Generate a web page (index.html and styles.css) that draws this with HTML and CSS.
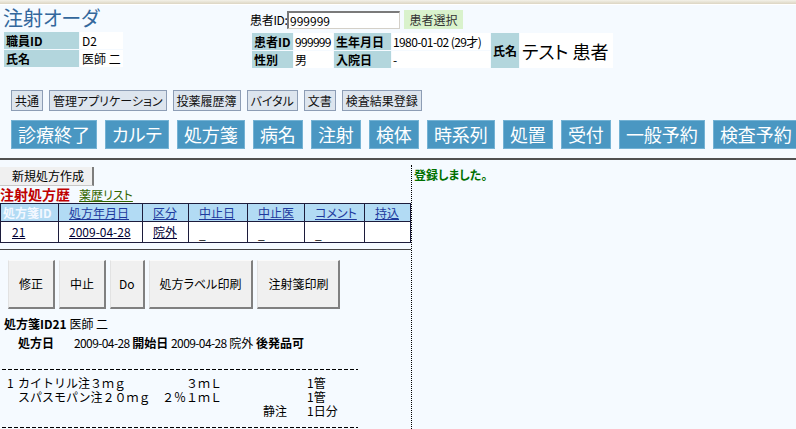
FILE: index.html
```html
<!DOCTYPE html>
<html lang="ja">
<head>
<meta charset="utf-8">
<title>注射オーダ</title>
<link rel="stylesheet" href="styles.css">
</head>
<body>
<div class="topbar"></div>
<header class="head">
  <div class="head-left">
    <h1 class="title">注射オーダ</h1>
    <table class="info staff">
      <tr><th class="s-th">職員ID</th><td class="s-td">D2</td></tr>
      <tr><th class="s-th">氏名</th><td class="s-td">医師 二</td></tr>
    </table>
  </div>
  <div class="head-mid">
    <div class="pid-row">
      <label class="pid-label">患者ID:</label>
      <input class="pid-input" type="text" value="999999">
      <button class="pid-btn" type="button">患者選択</button>
    </div>
    <table class="info patient">
      <tr>
        <th class="p-th1">患者ID</th><td class="p-td1">999999</td>
        <th class="p-th2">生年月日</th><td class="p-td2">1980-01-02 (29才)</td>
        <th class="p-th3" rowspan="2">氏名</th><td class="p-td3" rowspan="2">テスト 患者</td>
      </tr>
      <tr>
        <th class="p-th1">性別</th><td class="p-td1">男</td>
        <th class="p-th2">入院日</th><td class="p-td2">-</td>
      </tr>
    </table>
  </div>
</header>

<nav class="nav">
  <span class="nav-btn">共通</span>
  <span class="nav-btn">管理アプリケーション</span>
  <span class="nav-btn">投薬履歴簿</span>
  <span class="nav-btn">バイタル</span>
  <span class="nav-btn">文書</span>
  <span class="nav-btn">検査結果登録</span>
</nav>

<div class="big">
  <span class="big-btn">診療終了</span>
  <span class="big-btn">カルテ</span>
  <span class="big-btn">処方箋</span>
  <span class="big-btn">病名</span>
  <span class="big-btn">注射</span>
  <span class="big-btn">検体</span>
  <span class="big-btn">時系列</span>
  <span class="big-btn">処置</span>
  <span class="big-btn">受付</span>
  <span class="big-btn">一般予約</span>
  <span class="big-btn">検査予約</span>
</div>

<div class="sep"></div>

<main class="main">
  <section class="left">
    <button class="new-btn" type="button">新規処方作成</button>
    <div class="hist-head">
      <span class="hist-title">注射処方歴</span>
      <a class="hist-link" href="#">薬歴リスト</a>
    </div>
    <table class="hist">
      <tr>
        <th class="h-id">処方箋ID</th>
        <th><a href="#">処方年月日</a></th>
        <th><a href="#">区分</a></th>
        <th><a href="#">中止日</a></th>
        <th><a href="#">中止医</a></th>
        <th><a href="#">コメント</a></th>
        <th><a href="#">持込</a></th>
      </tr>
      <tr>
        <td class="d-id"><a href="#">21</a></td>
        <td><a href="#">2009-04-28</a></td>
        <td><a href="#">院外</a></td>
        <td class="d-under">_</td>
        <td class="d-under">_</td>
        <td class="d-under">_</td>
        <td></td>
      </tr>
    </table>
    <div class="rule"></div>
    <div class="actions">
      <button class="act" type="button">修正</button>
      <button class="act" type="button">中止</button>
      <button class="act act-do" type="button">Do</button>
      <button class="act" type="button">処方ラベル印刷</button>
      <button class="act" type="button">注射箋印刷</button>
    </div>
    <div class="rx-head"><b>処方箋ID21</b> 医師 二</div>
    <div class="rx-date"><b class="rx-date-label">処方日</b><span class="num">2009-04-28</span> <b>開始日</b> <span class="num">2009-04-28</span> 院外 <b>後発品可</b></div>
    <div class="dash"></div>
    <div class="rx-lines">
      <div class="rx-line"><span class="rx-no">1</span><span class="rx-name">カイトリル注３ｍｇ</span><span class="rx-amt">３ｍＬ</span><span class="rx-route"></span><span class="rx-qty">1管</span></div>
      <div class="rx-line"><span class="rx-no"></span><span class="rx-name">スパスモパン注２０ｍｇ</span><span class="rx-amt">２％１ｍＬ</span><span class="rx-route"></span><span class="rx-qty">1管</span></div>
      <div class="rx-line"><span class="rx-no"></span><span class="rx-name"></span><span class="rx-amt"></span><span class="rx-route">静注</span><span class="rx-qty">1日分</span></div>
    </div>
    <div class="dash dash-end"></div>
  </section>
  <section class="right">
    <p class="msg">登録しました。</p>
  </section>
</main>
</body>
</html>
```

FILE: styles.css
```css
* { box-sizing: border-box; }

html, body { margin: 0; padding: 0; }

body {
  width: 796px;
  height: 429px;
  overflow: hidden;
  background: #f5faff;
  color: #000;
  font-family: "Noto Sans CJK JP", "Noto Sans", sans-serif;
  font-size: 12px;
  line-height: 16px;
  font-feature-settings: "palt";
}

.topbar {
  height: 5px;
  background: linear-gradient(#f3f1e8, #dcd5c2);
  border-bottom: 1px solid #fff;
}

/* header */
.head { display: flex; }

.head-left { width: 250px; padding-left: 3px; }

.title {
  margin: 1px 0 0;
  font-size: 20px;
  line-height: 24px;
  font-weight: normal;
  color: #33679c;
}

.info { border-collapse: separate; border-spacing: 1px; }

.info th {
  background: #b3d6dd;
  font-weight: bold;
  text-align: left;
  padding: 0 2px;
  height: 17px;
  line-height: 17px;
  white-space: nowrap;
}

.info td {
  background: #fff;
  padding: 0 2px;
  height: 17px;
  line-height: 17px;
  white-space: nowrap;
}

.staff { margin-top: 1px; }
.s-th { width: 75px; }
.s-td { width: 42px; }

.head-mid { padding-top: 5px; }

.pid-row { display: flex; align-items: center; height: 19px; }

.pid-label { width: 37px; white-space: nowrap; letter-spacing: -0.3px; }

.pid-input {
  width: 113px;
  height: 18px;
  margin: 0;
  padding: 0 1px;
  border-top: 2px solid #7a7a7a;
  border-left: 2px solid #7a7a7a;
  border-right: 1px solid #d4d0c8;
  border-bottom: 1px solid #d4d0c8;
  background: #fff;
  font: inherit;
  font-size: 12px;
  line-height: 14px;
}

.pid-btn {
  margin-left: 4px;
  width: 59px;
  height: 19px;
  padding: 0;
  border: none;
  background: #d9f2cc;
  color: #333;
  font: inherit;
}

.patient { margin: 3px 0 0 1px; }
.p-th1 { width: 41px; }
.info .p-td1 { width: 39px; padding: 0 1px; letter-spacing: -0.7px; }
.p-th2 { width: 57px; }
.info .p-td2 { width: 98px; padding: 0 1px; letter-spacing: -0.6px; }
.info .p-th3 { width: 28px; padding: 0 2px; vertical-align: middle; }
.info .p-td3 { width: 93px; font-size: 18px; line-height: 20px; padding-left: 2px; vertical-align: middle; }

/* nav row */
.nav { display: flex; gap: 6px; margin: 21px 0 0 11px; }

.nav-btn {
  height: 21px;
  padding: 0 3px;
  border: 1px solid #8d9db5;
  background: #dde5ee;
  color: #111;
  line-height: 19px;
  white-space: nowrap;
}

/* big buttons */
.big { display: flex; gap: 8px; margin: 9px 0 0 11px; }

.big-btn {
  height: 29px;
  padding: 0 6px;
  background: #4a97c2;
  border: 1px solid #74b2d4;
  color: #fff;
  font-size: 18px;
  line-height: 27px;
  white-space: nowrap;
}

.sep { margin-top: 9px; height: 2px; background: #505050; }

/* main */
.main { display: flex; margin-top: 5px; }

.left {
  width: 412px;
  min-height: 270px;
  padding-top: 2px;
  border-right: 1px dotted #000;
}

.right { flex: 1; padding: 2px 0 0 2px; }

.msg { margin: 0; color: #007000; font-weight: bold; line-height: 16px; }

.new-btn {
  display: block;
  width: 94px;
  height: 19px;
  margin: 0;
  padding: 0 0 0 12px;
  text-align: left;
  background: #f0f0f0;
  border: none;
  border-right: 2px solid #7d7d7d;
  border-bottom: 1px solid #c8c8c8;
  font: inherit;
  color: #000;
  line-height: 18px;
}

.hist-head { display: flex; align-items: baseline; gap: 9px; height: 17px; line-height: 17px; }
.hist-title { color: #c00000; font-weight: bold; font-size: 14px; }
.hist-link { color: #336600; text-decoration: underline; }

.hist { border-collapse: collapse; width: 411px; margin-top: 0; }

.hist th, .hist td { border: 1px solid #1c1c3c; white-space: nowrap; }

.hist th {
  background: #b2dbf4;
  height: 18px;
  padding: 0 0 0 10px;
  text-align: left;
  font-weight: normal;
}

.hist th a { color: #1e3a9e; text-decoration: underline; }

.hist th:nth-child(1) { width: 58px; }
.hist th:nth-child(2) { width: 84px; }
.hist th:nth-child(3) { width: 46px; }
.hist th:nth-child(4) { width: 59px; }
.hist th:nth-child(5) { width: 57px; }
.hist th:nth-child(6) { width: 60px; }

.hist .h-id { padding: 0 2px; color: #f4f8ff; font-weight: bold; }

.hist td { background: #fff; height: 21px; padding: 0 0 0 10px; }
.hist td a { color: #000033; text-decoration: underline; }
.hist .d-id { padding-left: 11px; }
.hist .d-under { vertical-align: bottom; line-height: 16px; }

.rule { margin-top: 6px; width: 411px; border-top: 1px solid #444; }

.actions { display: flex; gap: 4px; margin: 10px 0 0 8px; }

.act {
  height: 49px;
  margin: 0;
  padding: 0 10px;
  background: #f0f0f0;
  border-top: 1px solid #fafafa;
  border-left: 1px solid #e2e2e2;
  border-right: 2px solid #808080;
  border-bottom: 2px solid #808080;
  font: inherit;
  color: #000;
  white-space: nowrap;
}

.act-do { padding: 0 8px; }

.rx-head { margin-top: 7px; padding-left: 4px; }

.rx-date { margin-top: 3px; padding-left: 18px; white-space: nowrap; }
.rx-date-label { display: inline-block; width: 56px; }
.num { letter-spacing: -0.6px; }

.dash {
  margin: 18px 0 0 2px;
  width: 356px;
  height: 1px;
  background: repeating-linear-gradient(90deg, #000 0 4px, transparent 4px 6px);
}

.dash-end { margin-top: 9px; }

.rx-lines { margin-top: 6px; font-feature-settings: normal; }

.rx-line { display: flex; height: 14px; line-height: 14px; white-space: nowrap; }
.rx-no { width: 18px; padding-left: 7px; }
.rx-name { width: 132px; }
.rx-amt { width: 72px; text-align: right; }
.rx-route { width: 85px; padding-right: 20px; text-align: right; }
.rx-qty { }
```
